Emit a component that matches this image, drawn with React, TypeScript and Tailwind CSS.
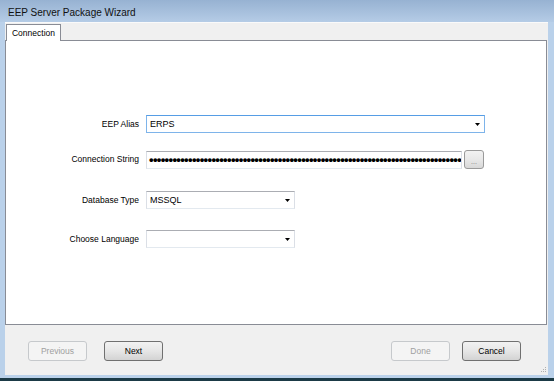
import React from "react";

const font = { fontFamily: '"Liberation Sans", Arial, sans-serif' };

function Arrow() {
  return (
    <svg width="5" height="3" viewBox="0 0 5 3" className="shrink-0">
      <path d="M0 0h5L2.5 3z" fill="#000" />
    </svg>
  );
}

function Combo({ width, value, focused }: { width: string; value: string; focused?: boolean }) {
  return (
    <div
      className={`${width} h-[18px] flex items-center justify-between bg-white border pl-[3px] pr-[4px] ${
        focused
          ? "border-[#7eb4ea] border-t-[#569de5]"
          : "border-[#dbdfe6] border-t-[#abadb3] border-b-[#e3e9ef]"
      }`}
    >
      <span className="text-[9px] text-black leading-none">{value}</span>
      <Arrow />
    </div>
  );
}

function Button({ label, disabled }: { label: string; disabled?: boolean }) {
  return (
    <button
      className={`w-[59px] h-[20px] rounded-[3px] border text-[8.5px] leading-none ${
        disabled
          ? "border-[#c6c9cc] bg-[#f4f4f4] text-[#a0a0a0]"
          : "border-[#707070] bg-gradient-to-b from-[#f2f2f2] via-[#e6e6e6] to-[#d3d3d3] text-black"
      }`}
    >
      {label}
    </button>
  );
}

function Row({ label, children, className }: { label: string; children: React.ReactNode; className?: string }) {
  return (
    <div className={`flex items-center ${className ?? ""}`}>
      <div className="w-[134px] text-right text-[8.5px] text-black leading-none pr-[1px]">{label}</div>
      <div className="ml-[6px] flex items-center">{children}</div>
    </div>
  );
}

export default function App() {
  return (
    <div style={font} className="w-[554px] h-[381px] flex flex-col bg-[#bad1ea] overflow-hidden">
      {/* title bar */}
      <div className="h-[22px] shrink-0 flex items-center pl-[8px] pt-[2px] bg-gradient-to-b from-[#97b2d2] to-[#b5cce6]">
        <span className="text-[10px] text-[#111]">EEP Server Package Wizard</span>
      </div>

      <div className="flex-1 flex pl-[5px] pr-[6px]">
        <div className="flex-1 flex flex-col bg-[#f0f0f0]">
          {/* tabs */}
          <div className="h-[18px] shrink-0 flex items-end border-t border-[#fafafa]">
            <div className="ml-[1px] w-[55px] h-[17px] bg-white border border-b-0 border-[#898c95] flex items-center justify-center text-[8.5px] text-black relative top-[1px]">
              Connection
            </div>
          </div>
          <div className="h-[285px] shrink-0 bg-white border border-[#898c95] mr-[1px] flex flex-col">
            <Row label="EEP Alias" className="mt-[74px]">
              <Combo width="w-[339px]" value="ERPS" focused />
            </Row>
            <Row label="Connection String" className="mt-[17px]">
              <div className="w-[316px] h-[18px] bg-white border border-[#dbdfe6] border-t-[#abadb3] border-b-[#e3e9ef] pl-[2px] overflow-hidden whitespace-nowrap flex items-center">
                <span className="text-[13px] font-bold tracking-[-0.65px] leading-none text-black">{"•".repeat(80)}</span>
              </div>
              <button className="ml-[2px] w-[20px] h-[19px] rounded-[3px] border border-[#9a9a9a] bg-gradient-to-b from-[#f2f2f2] via-[#e8e8e8] to-[#d8d8d8] text-[7px] text-[#777] leading-none pt-[3px]">
                ...
              </button>
            </Row>
            <Row label="Database Type" className="mt-[22px]">
              <Combo width="w-[149px]" value="MSSQL" />
            </Row>
            <Row label="Choose Language" className="mt-[21px]">
              <Combo width="w-[149px]" value="" />
            </Row>
          </div>

          {/* buttons */}
          <div className="flex-1 flex justify-between items-start pt-[16px] relative">
            <div className="flex gap-[17px] pl-[23px]">
              <Button label="Previous" disabled />
              <Button label="Next" />
            </div>
            <div className="flex gap-[12px] pr-[27px]">
              <Button label="Done" disabled />
              <Button label="Cancel" />
            </div>
            <svg width="6" height="6" viewBox="0 0 6 6" className="absolute right-[1px] bottom-[2px]">
              <g fill="#b0b0b0">
                <rect x="4" y="0" width="1" height="1" />
                <rect x="2" y="2" width="1" height="1" />
                <rect x="4" y="2" width="1" height="1" />
                <rect x="0" y="4" width="1" height="1" />
                <rect x="2" y="4" width="1" height="1" />
                <rect x="4" y="4" width="1" height="1" />
              </g>
            </svg>
          </div>
        </div>
      </div>
      <div className="h-[3px] shrink-0 bg-[#bad1ea]" />
      <div className="h-[3px] shrink-0 bg-[#1b3a46]" />
    </div>
  );
}
